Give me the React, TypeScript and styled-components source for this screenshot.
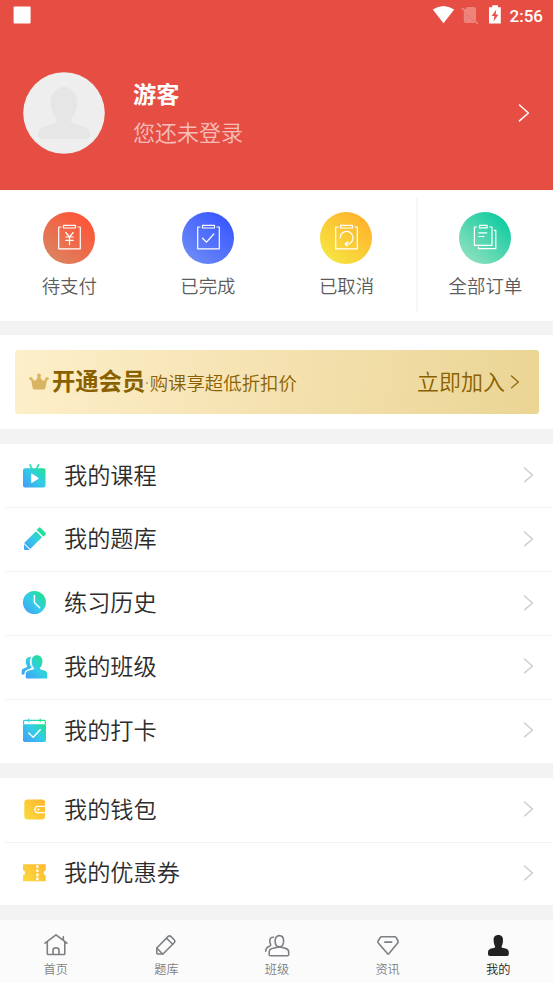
import React from 'react';
import styled, { createGlobalStyle } from 'styled-components';

const GlobalStyle = createGlobalStyle`
  * { box-sizing: border-box; }
  body {
    margin: 0;
    background: #f3f3f3;
    font-family: "Noto Sans CJK SC", "Noto Sans", sans-serif;
    font-weight: 350;
  }
`;

const Screen = styled.div`
  width: 553px;
  height: 983px;
  overflow: hidden;
  display: flex;
  flex-direction: column;
  background: #f3f3f3;
`;

const Header = styled.header`
  height: 190.4px;
  flex: none;
  background: #e64e43;
  color: #fff;
`;

const StatusBar = styled.div`
  height: 30px;
  display: flex;
  align-items: center;
  justify-content: space-between;
  padding: 0 10px 0 13px;
`;

const StatusIcons = styled.div`
  display: flex;
  align-items: center;
`;

const Clock = styled.span`
  font: 500 17px/20px Roboto, sans-serif;
  margin-left: 8px;
  padding-top: 1px;
`;

const Profile = styled.div`
  display: flex;
  align-items: center;
  height: 82px;
  margin-top: 42px;
  padding: 0 23px;
`;

const ProfileText = styled.div`
  flex: 1;
  margin-left: 28px;
  padding-bottom: 2px;
`;

const UserName = styled.div`
  font-size: 23.2px;
  font-weight: 700;
  line-height: 38px;
`;

const LoginHint = styled.div`
  font-size: 22px;
  line-height: 38px;
  color: rgba(255, 255, 255, 0.65);
`;

const Orders = styled.section`
  height: 130.6px;
  flex: none;
  display: flex;
  background: #fff;
`;

const OrderItem = styled.div<{ $divided?: boolean }>`
  flex: ${(p) => (p.$divided ? '1' : '0 0 138.6px')};
  height: 114px;
  margin-top: 8px;
  padding-top: 14px;
  display: flex;
  flex-direction: column;
  align-items: center;
  border-left: ${(p) => (p.$divided ? '2px solid #f8f8f8' : '0')};
`;

const OrderLabel = styled.span`
  margin-top: 6.6px;
  font-size: 18.4px;
  line-height: 28px;
  color: #5c5c5c;
`;

const MemberSection = styled.section`
  height: 93.6px;
  flex: none;
  margin-top: 14.4px;
  padding: 14.5px 14px 0 15px;
  background: #fff;
`;

const MemberBanner = styled.div`
  height: 64px;
  display: flex;
  align-items: center;
  padding: 0 19px 0 14px;
  border-radius: 3px;
  color: #8a6100;
  background: linear-gradient(100deg, #fdefca 0%, #f3dfab 58%, #ead594 100%);
`;

const MemberTitle = styled.strong`
  margin-left: 3px;
  font-size: 23.3px;
  line-height: 36px;
  padding-bottom: 4px;
`;

const MemberText = styled.span`
  flex: 1;
  font-size: 18.4px;
  line-height: 28px;
  white-space: nowrap;
`;

const Dot = styled.i`
  display: inline-block;
  width: 2px;
  height: 2px;
  margin: 0 1.5px 6px 1px;
  border-radius: 1px;
  background: #b79a55;
`;

const JoinText = styled.span`
  font-size: 22px;
  line-height: 34px;
  margin-right: 5px;
  padding-bottom: 4px;
`;

const MenuGroup = styled.nav`
  flex: none;
  margin-top: 14.6px;
  background: #fff;
`;

const MenuRow = styled.div`
  height: 63.9px;
  display: flex;
  align-items: center;
  padding: 0 19px 1px 20px;
  & + & {
    background: linear-gradient(#f3f3f3, #f3f3f3) 5px 0 / 100% 1px no-repeat;
  }
`;

const MenuLabel = styled.span`
  flex: 1;
  margin-left: 15px;
  padding-bottom: 3px;
  font-size: 23.2px;
  line-height: 36px;
  color: #2c2c2c;
`;

const TabBar = styled.footer`
  height: 63px;
  flex: none;
  margin-top: auto;
  display: flex;
  background: #fbfbfb;
`;

const TabItem = styled.div<{ $active?: boolean }>`
  flex: 1;
  display: flex;
  flex-direction: column;
  align-items: center;
  padding: 12px 0 0 1px;
  color: ${(p) => (p.$active ? '#222' : '#7c7f83')};
`;

const TabLabel = styled.span`
  margin-top: 1px;
  font-size: 12.2px;
  line-height: 18px;
`;

const Icon = styled.svg`
  display: block;
  flex: none;
  fill: none;
  stroke-linecap: round;
  stroke-linejoin: round;
`;

const Chevron = ({ h, w, color, line }: { h: number; w: number; color: string; line: number }) => (
  <Icon width={w + 2} height={h + 2} viewBox={`-1 -1 ${w + 2} ${h + 2}`} stroke={color} strokeWidth={line}>
    <path d={`M0.5 0L${w - 0.6} ${h / 2 - 0.3}L0.5 ${h - 0.6}`} />
  </Icon>
);

const clipboard = (
  <>
    <path d="M18 15H15.7V36.8H37.3V15H35" />
    <rect x="20.5" y="13.3" width="12" height="2.7" />
  </>
);

const orders = [
  {
    id: 'pay', label: '待支付', from: '#db825f', to: '#ff5437',
    art: <>{clipboard}<path d="M22.8 20.5L26.5 25L30.2 20.5M26.5 25V32.7M22.8 25H30.2M22.8 28.4H30.2" /></>,
  },
  {
    id: 'done', label: '已完成', from: '#6b8af7', to: '#3957ff',
    art: <>{clipboard}<path d="M20.5 26.2L24.6 30.2L31.8 22" /></>,
  },
  {
    id: 'cancel', label: '已取消', from: '#f6e440', to: '#ffb22d',
    art: <>{clipboard}<path d="M20.2 25.8A6.4 6.4 0 1 1 26.3 32.2M27.8 29.8L25 32L27.5 34" /></>,
  },
  {
    id: 'all', label: '全部订单', from: '#8ce0be', to: '#10cba0', divided: true,
    art: (
      <>
        <path d="M17.7 15H15.4V33.3H33V15H30.5M36.8 18.3V36.7H19.5V35.2M35.3 18.3H36.8" />
        <rect x="20.5" y="13.3" width="7.6" height="2.6" />
        <path d="M19.8 20.8H27.8M19.8 24.5H25" />
      </>
    ),
  },
];

const cool = 'url(#cool)';
const warm = 'url(#warm)';

const courseMenu = [
  {
    label: '我的课程',
    art: (
      <>
        <path fill={cool} fillRule="evenodd" d="M5 7.3H23.5Q25.5 7.3 25.5 9.3V24.5Q25.5 26.5 23.5 26.5H5Q3 26.5 3 24.5V9.3Q3 7.3 5 7.3ZM11.2 13V21.5Q11.4 22.2 12.2 21.8L18.2 17.9Q18.8 17.3 18.2 16.7L12.2 12.7Q11.4 12.3 11.2 13Z" />
        <path stroke="#2edfac" strokeWidth="1.7" d="M10 3.8L11.7 7.3M18.5 3.8L16.7 7.3" />
      </>
    ),
  },
  {
    label: '我的题库',
    art: (
      <>
        <path fill={cool} d="M4.6 18.6L15.5 7.7Q16 7.2 16.5 7.7L21.5 12.7Q22 13.2 21.5 13.7L10.7 24.5Q10.3 24.9 9.8 24.4L4.6 19.6Q4.1 19 4.6 18.6Z" />
        <path fill="#20df9b" d="M17 5.6L18.9 3.7Q19.7 3 20.5 3.8L25.5 8.8Q26.3 9.6 25.6 10.4L23.8 12.2Q23.4 12.5 23 12.2L17 6.3Q16.7 6 17 5.6Z" />
        <path fill="#40a9f5" d="M4 20.2L9.4 25.4L8.8 26H5Q4 26 4 25Z" />
      </>
    ),
  },
  {
    label: '练习历史',
    art: (
      <>
        <circle fill={cool} cx="14.4" cy="14.5" r="11.5" />
        <path stroke="#fff" strokeWidth="1.5" d="M14.4 7.5V14.5L19.7 19.8" />
      </>
    ),
  },
  {
    label: '我的班级',
    art: (
      <>
        <path fill={cool} d="M9.5 4.9Q10.2 4.7 11 4.9Q9.9 7 9.9 10Q9.9 13.3 11.4 15.2Q12 16 10.5 16.5L6.5 18.1Q4.5 19.5 4.2 22.5H1.7V18.8Q1.7 17.3 3.1 16.8L6.6 15.2Q7.6 14.5 6.9 13.6Q5.7 12 5.7 9.5Q5.7 5.5 9.5 4.9Z" />
        <path fill={cool} d="M17 3.2C20.5 3.2 22.4 5.6 22.4 9.3C22.4 12.3 21.5 14.5 20 16C19.6 16.7 20 17.3 20.8 17.5L25 18.7C26.5 19.2 27.2 20.4 27.2 22V26.6H7.2Q5.7 26.6 5.7 25.2V22C5.7 20.3 6.7 19.2 8.2 18.7L13.2 17.5C14 17.3 14.4 16.7 14 16C12.5 14.5 11.6 12.3 11.6 9.3C11.6 5.6 13.5 3.2 17 3.2Z" />
      </>
    ),
  },
  {
    label: '我的打卡',
    art: (
      <>
        <path fill={cool} d="M3 8.3H26V24.2Q26 26 24.2 26H4.8Q3 26 3 24.2Z" />
        <path stroke={cool} strokeWidth="1.2" d="M3.6 7.5V5.6Q3.6 4.4 4.8 4.4H24.2Q25.4 4.4 25.4 5.6V7.5M8.7 3.2V5.7M20.2 3.2V5.7" />
        <path stroke="#fff" strokeWidth="1.5" d="M8.8 17L13.2 21.3L20.2 13.8" />
      </>
    ),
  },
];

const walletMenu = [
  {
    label: '我的钱包',
    art: (
      <>
        <rect fill={warm} x="4.3" y="4.4" width="20.7" height="20" rx="3" />
        <path stroke="#fff" strokeWidth="1.4" strokeLinecap="butt" d="M25 11.4H17.7C14 11.4 14 17.6 17.7 17.6H25" />
        <circle cx="18.4" cy="14.5" r="1.1" fill="#fff" />
      </>
    ),
  },
  {
    label: '我的优惠券',
    art: (
      <>
        <path fill={warm} d="M3 6.2H25.7V12.2A2.6 2.6 0 0 0 25.7 17.3V23.2H3V17.3A2.6 2.6 0 0 0 3 12.2Z" />
        <path stroke="#fff" strokeWidth="2.2" strokeDasharray="2.7 1.4" strokeLinecap="butt" d="M17.4 7.3V23" />
      </>
    ),
  },
];

const tabs = [
  {
    label: '首页',
    art: <path d="M3 11.1L14 2.9L25 11.1M21.3 8V4.7M5.3 10V21.4Q5.3 22.5 6.4 22.5H21.7Q22.8 22.5 22.8 21.4V10M11 22.3V18.3Q11 15.8 14 15.8Q17 15.8 17 18.3V22.3" />,
  },
  {
    label: '题库',
    art: (
      <>
        <path d="M4.8 16L16.2 4.4Q17.5 3.2 18.8 4.4L22.4 8Q23.6 9.3 22.4 10.5L11 22H5.7Q4.8 22 4.8 21Z" />
        <path d="M14.5 6.2L20.7 12.3M5 16.3L10.6 22" />
      </>
    ),
  },
  {
    label: '班级',
    art: (
      <>
        <path d="M16.4 3.6C19.4 3.6 20.6 6 20.6 9C20.6 12 19.5 14.9 16.4 14.9C13.3 14.9 12.1 12 12.1 9C12.1 6 13.4 3.6 16.4 3.6Z" />
        <path d="M12.5 15.7C8.5 16.7 6.2 16.7 6.2 20V22.4Q6.2 23.7 7.5 23.7H24.4Q25.7 23.7 25.7 22.4V20C25.7 16.7 23.5 16.7 20.2 15.7M12.5 15.7Q16.4 14.2 20.2 15.7M10.3 5.3C7.3 5 6.5 7.7 6.9 9.8C7 12 8.2 12.4 7.6 13.4C7 14.5 2.7 14.2 2.7 19.2" />
      </>
    ),
  },
  {
    label: '资讯',
    art: <path d="M7.8 4.7H20.5Q21.6 4.7 22.2 5.7L24 9Q24.5 10 23.7 11L15 21.6Q14.2 22.4 13.4 21.6L4.3 11Q3.5 10 4 9L6.1 5.7Q6.7 4.7 7.8 4.7ZM10.8 10.1H17.8" />,
  },
  {
    label: '我的', active: true,
    art: <path fill="currentColor" stroke="none" d="M14.3 3C17.6 3 19.2 5.1 19 8.3C19 11.5 18 13.5 17.5 14.8C17.5 15.7 18.5 15.9 20.5 16.3C23.7 16.9 24.8 18 24.8 20.5V22.3Q24.8 24.1 23 24.1H5.8Q4 24.1 4 22.3V20.5C4 18 5.2 16.9 8.3 16.3C10.3 15.9 11.2 15.7 11.2 14.8C10.6 13.5 9.7 11.5 9.6 8.3C9.4 5.1 11 3 14.3 3Z" />,
  },
];

const GradientDefs = () => (
  <defs>
    <linearGradient id="cool" gradientUnits="userSpaceOnUse" x1="4" y1="25" x2="25" y2="4">
      <stop offset="0" stopColor="#419ff8" />
      <stop offset="0.5" stopColor="#33cde5" />
      <stop offset="1" stopColor="#1be678" />
    </linearGradient>
    <linearGradient id="warm" gradientUnits="userSpaceOnUse" x1="4" y1="25" x2="25" y2="4">
      <stop offset="0" stopColor="#f9dc3f" />
      <stop offset="1" stopColor="#ffb52c" />
    </linearGradient>
  </defs>
);

const Menu = ({ items }: { items: { label: string; art: React.ReactNode }[] }) => (
  <MenuGroup>
    {items.map((item) => (
      <MenuRow key={item.label}>
        <Icon width="29" height="29" viewBox="0 0 29 29"><GradientDefs />{item.art}</Icon>
        <MenuLabel>{item.label}</MenuLabel>
        <Chevron w={9} h={14.5} color="#c9c9c9" line={1.3} />
      </MenuRow>
    ))}
  </MenuGroup>
);

export default function App() {
  return (
    <Screen>
      <GlobalStyle />
      <Header>
        <StatusBar>
          <Icon width="18" height="18" viewBox="0 0 18 18"><rect x="0.6" y="0.4" width="17" height="17" rx="1" fill="#fff" /></Icon>
          <StatusIcons>
            <Icon width="70" height="24" viewBox="0 0 70 24">
              <path fill="#fff" d="M0.8 6.5Q11.5 -0.5 22.2 6.5L11.5 20.2Z" />
              <path fill="#fff" fillOpacity=".3" d="M35 4H42Q44 4 44 6V18L32 7ZM31.8 8V18Q31.8 20 33.8 20H43.5Z" />
              <path stroke="#f08d86" strokeWidth="1.3" d="M30.2 5.2L45.5 20.5" />
              <path fill="#fff" fillRule="evenodd" d="M60.2 2.3H66V4.2H68.8V20.4H57V4.2H60.2ZM64.3 6.5L59.7 13H62.5L61.5 18.5L66.5 11.5H63.6Z" />
            </Icon>
            <Clock>2:56</Clock>
          </StatusIcons>
        </StatusBar>
        <Profile>
          <Icon width="82" height="82" viewBox="0 0 82 82">
            <circle cx="41" cy="41" r="40.8" fill="#eee" />
            <path fill="#e6e6e6" d="M41 15C49 15 54.3 22 54.3 31C54.3 38 51.5 43 48.2 47C46.8 49.2 48.5 50.3 51 51.3C59 54.5 67 55.5 67 62Q67 67 62 67H20Q15 67 15 62C15 55.5 23 54.5 31 51.3C33.5 50.3 35.2 49.2 33.8 47C30.5 43 27.7 38 27.7 31C27.7 22 33 15 41 15Z" />
          </Icon>
          <ProfileText>
            <UserName>游客</UserName>
            <LoginHint>您还未登录</LoginHint>
          </ProfileText>
          <Chevron w={10} h={16.5} color="#fff" line={1.5} />
        </Profile>
      </Header>

      <Orders>
        {orders.map((o) => (
          <OrderItem key={o.id} $divided={o.divided}>
            <Icon width="52" height="52" viewBox="0 0 52 52" stroke="#fff" strokeWidth="1.2">
              <defs>
                <linearGradient id={o.id} x1=".15" y1=".9" x2=".85" y2=".1">
                  <stop offset="0" stopColor={o.from} />
                  <stop offset="1" stopColor={o.to} />
                </linearGradient>
              </defs>
              <circle cx="26" cy="26" r="26" fill={`url(#${o.id})`} stroke="none" />
              {o.art}
            </Icon>
            <OrderLabel>{o.label}</OrderLabel>
          </OrderItem>
        ))}
      </Orders>

      <MemberSection>
        <MemberBanner>
          <Icon width="20" height="18" viewBox="0 0 20 18">
            <g fill="#d9b462">
              <path d="M1.8 5.2L6.2 8L10 2.5L13.8 8L18.3 5.2L16.3 15.2Q16 16.5 14.6 16.5H5.4Q4 16.5 3.7 15.2Z" />
              <circle cx="1.9" cy="5.6" r="1.7" />
              <circle cx="10" cy="2.5" r="1.9" />
              <circle cx="18.1" cy="5.6" r="1.7" />
            </g>
          </Icon>
          <MemberTitle>开通会员</MemberTitle>
          <MemberText><Dot />购课享超低折扣价</MemberText>
          <JoinText>立即加入</JoinText>
          <Chevron w={8} h={12.5} color="#8a6100" line={1.2} />
        </MemberBanner>
      </MemberSection>

      <Menu items={courseMenu} />
      <Menu items={walletMenu} />

      <TabBar>
        {tabs.map((t) => (
          <TabItem key={t.label} $active={t.active}>
            <Icon width="28" height="27" viewBox="0 0 28 27" stroke="currentColor" strokeWidth="1.6">{t.art}</Icon>
            <TabLabel>{t.label}</TabLabel>
          </TabItem>
        ))}
      </TabBar>
    </Screen>
  );
}
